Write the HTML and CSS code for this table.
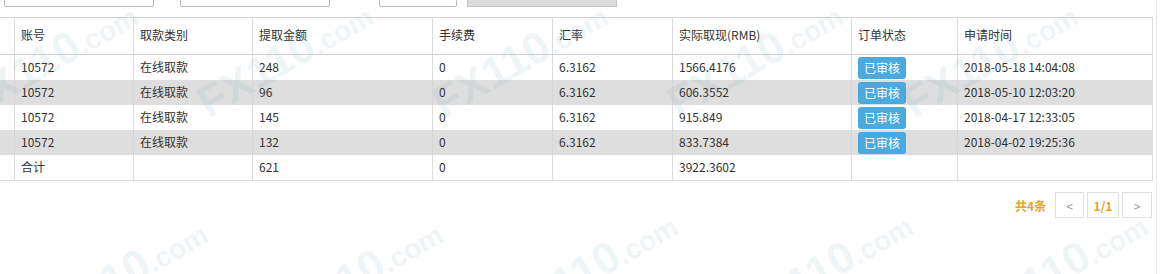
FILE: index.html
```html
<!DOCTYPE html>
<html lang="zh-CN">
<head>
<meta charset="utf-8">
<title>取款记录</title>
<link rel="stylesheet" href="styles.css">
</head>
<body>
<div class="page">
  <div class="filters">
    <span class="input w150"></span>
    <span class="input w150 ml26"></span>
    <span class="input w78 ml49"></span>
    <span class="btn-grey"></span>
  </div>

  <div class="grid">
    <div class="row head">
      <div class="c"></div><div class="c">账号</div><div class="c">取款类别</div><div class="c">提取金额</div><div class="c">手续费</div><div class="c">汇率</div><div class="c">实际取现(RMB)</div><div class="c">订单状态</div><div class="c">申请时间</div>
    </div>
    <div class="row">
      <div class="c"></div><div class="c">10572</div><div class="c">在线取款</div><div class="c">248</div><div class="c">0</div><div class="c">6.3162</div><div class="c">1566.4176</div><div class="c"><span class="badge">已审核</span></div><div class="c">2018-05-18 14:04:08</div>
    </div>
    <div class="row alt">
      <div class="c"></div><div class="c">10572</div><div class="c">在线取款</div><div class="c">96</div><div class="c">0</div><div class="c">6.3162</div><div class="c">606.3552</div><div class="c"><span class="badge">已审核</span></div><div class="c">2018-05-10 12:03:20</div>
    </div>
    <div class="row">
      <div class="c"></div><div class="c">10572</div><div class="c">在线取款</div><div class="c">145</div><div class="c">0</div><div class="c">6.3162</div><div class="c">915.849</div><div class="c"><span class="badge">已审核</span></div><div class="c">2018-04-17 12:33:05</div>
    </div>
    <div class="row alt">
      <div class="c"></div><div class="c">10572</div><div class="c">在线取款</div><div class="c">132</div><div class="c">0</div><div class="c">6.3162</div><div class="c">833.7384</div><div class="c"><span class="badge">已审核</span></div><div class="c">2018-04-02 19:25:36</div>
    </div>
    <div class="row last">
      <div class="c"></div><div class="c">合计</div><div class="c"></div><div class="c">621</div><div class="c">0</div><div class="c"></div><div class="c">3922.3602</div><div class="c"></div><div class="c"></div>
    </div>
  </div>

  <div class="pager">
    <span class="total">共4条</span>
    <span class="pbtn w29">&lt;</span>
    <span class="pbtn w32 cur">1/1</span>
    <span class="pbtn w30">&gt;</span>
  </div>

  <div class="watermarks" aria-hidden="true">
    <span class="wm" style="left:-20px;top:80px">FX110<small>.com</small></span>
    <span class="wm" style="left:215px;top:80px">FX110<small>.com</small></span>
    <span class="wm" style="left:450px;top:80px">FX110<small>.com</small></span>
    <span class="wm" style="left:685px;top:80px">FX110<small>.com</small></span>
    <span class="wm" style="left:920px;top:80px">FX110<small>.com</small></span>
    <span class="wm" style="left:50px;top:298px">FX110<small>.com</small></span>
    <span class="wm" style="left:285px;top:298px">FX110<small>.com</small></span>
    <span class="wm" style="left:520px;top:290px">FX110<small>.com</small></span>
    <span class="wm" style="left:755px;top:290px">FX110<small>.com</small></span>
    <span class="wm" style="left:990px;top:290px">FX110<small>.com</small></span>
  </div>
</div>
</body>
</html>
```

FILE: styles.css
```css
html, body {
  margin: 0;
  padding: 0;
  background: #fff;
}
body {
  font-family: "Noto Sans CJK SC", "Microsoft YaHei", "Liberation Sans", sans-serif;
  font-size: 12px;
  color: #333;
}
.page {
  position: relative;
  width: 1156px;
  height: 274px;
  border-right: 1px solid #e6e6e6;
  overflow: hidden;
}
.filters {
  display: flex;
  align-items: flex-end;
  height: 27px;
  margin-top: -20px;
  padding-left: 4px;
}
.input {
  display: block;
  height: 27px;
  box-sizing: border-box;
  border: 1px solid #b8b8b8;
  border-radius: 2px;
  background: #fff;
}
.w150 { width: 150px; }
.w78 { width: 78px; }
.ml26 { margin-left: 26px; }
.ml49 { margin-left: 49px; }
.btn-grey {
  display: block;
  width: 150px;
  height: 27px;
  margin-left: 10px;
  box-sizing: border-box;
  border: 1px solid #c4c4c4;
  background: #dcdcdc;
}

.grid {
  margin-top: 10px;
  width: 1153px;
  border-top: 1px solid #d4d4d4;
  border-bottom: 1px solid #d9d9d9;
}
.row {
  display: grid;
  grid-template-columns: 14px 119px 119px 180px 120px 120px 179px 106px 196px;
  height: 25px;
}
.row.head {
  height: 36px;
  border-bottom: 1px solid #d4d4d4;
}
.row.alt { background: #dedede; }
.c {
  box-sizing: border-box;
  border-left: 1px solid #dcdcdc;
  padding: 0 6px 2px;
  display: flex;
  align-items: center;
  white-space: nowrap;
  overflow: hidden;
}
.row.head .c { padding-bottom: 4px; }
.c:first-child { border-left: 0; padding: 0; }
.c:last-child { border-right: 1px solid #dcdcdc; }
.row.alt .c { border-left-color: #d6d6d6; }

.badge {
  display: inline-flex;
  align-items: center;
  justify-content: center;
  width: 48px;
  height: 22px;
  margin-top: 2px;
  border-radius: 3px;
  background: #4aaade;
  color: #fff;
  font-size: 12px;
}

.pager {
  display: flex;
  justify-content: flex-end;
  align-items: center;
  width: 1152px;
  margin-top: 11px;
  height: 26px;
}
.total {
  color: #e3a526;
  font-weight: bold;
  margin-right: 6px;
}
.pbtn {
  display: flex;
  align-items: center;
  justify-content: center;
  box-sizing: border-box;
  height: 26px;
  border: 1px solid #e0e0e0;
  background: #fff;
  color: #999;
  margin-left: 3px;
}
.w29 { width: 29px; }
.w32 { width: 32px; }
.w30 { width: 30px; }
.pbtn.cur {
  color: #e3a526;
  font-weight: bold;
}

.watermarks {
  position: absolute;
  inset: 0;
  pointer-events: none;
  overflow: hidden;
}
.wm {
  position: absolute;
  transform: rotate(-30deg);
  transform-origin: left bottom;
  font-family: "Liberation Sans", sans-serif;
  font-weight: bold;
  font-size: 44px;
  line-height: 44px;
  color: rgba(90, 140, 175, 0.1);
  white-space: nowrap;
}
.wm small {
  font-size: 28px;
}
```
